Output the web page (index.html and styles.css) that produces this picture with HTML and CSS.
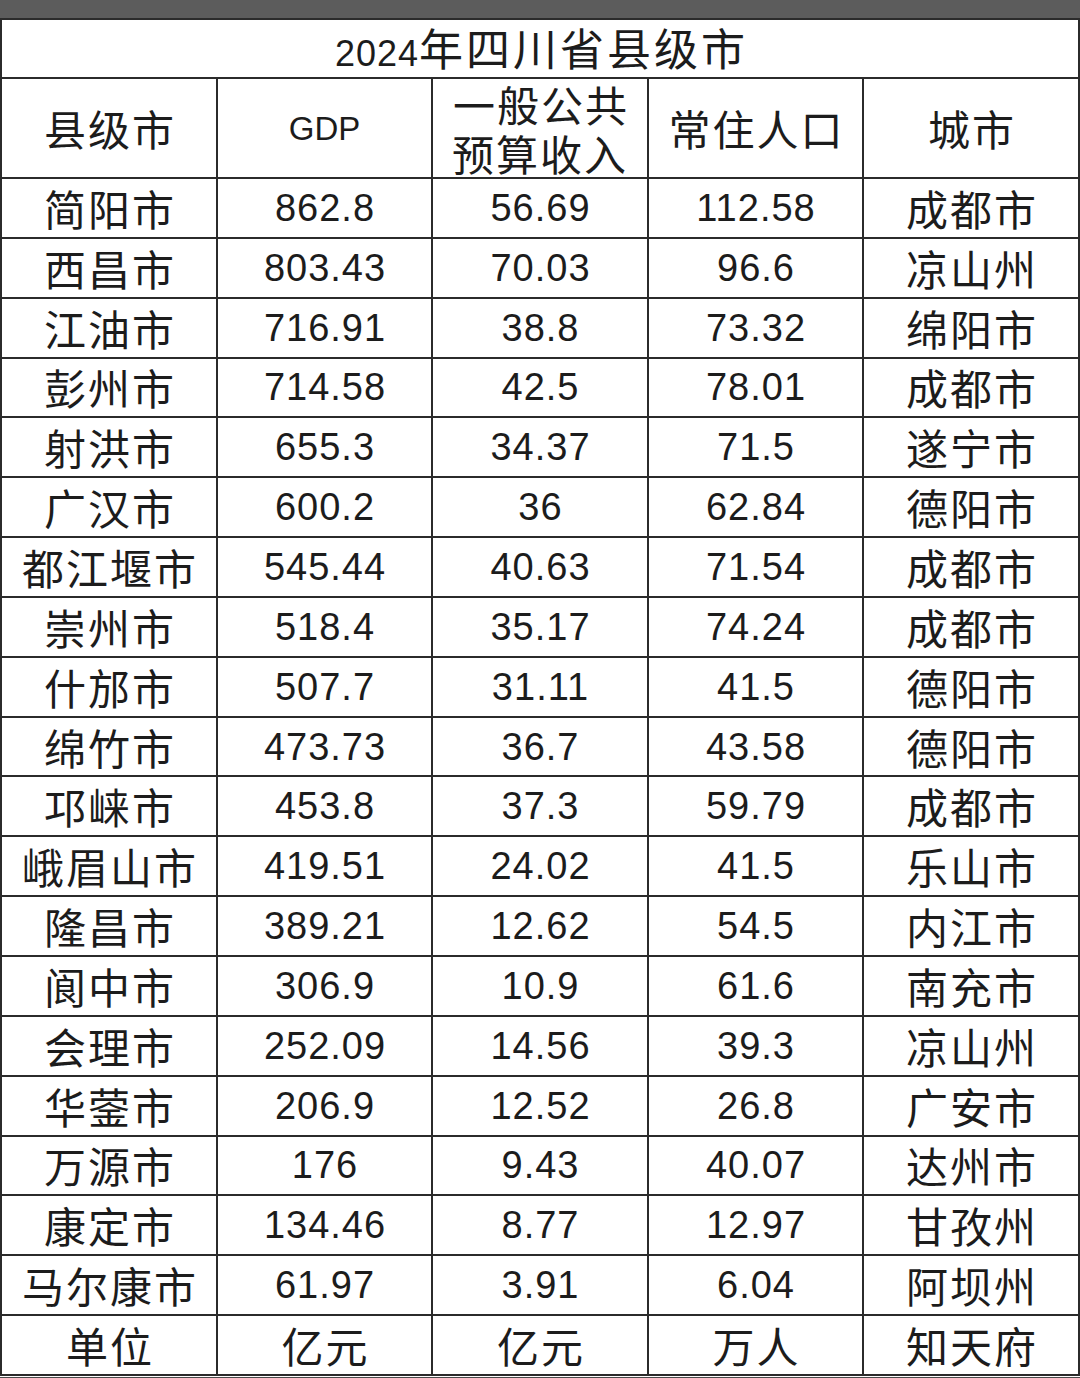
FILE: index.html
```html
<!DOCTYPE html>
<html lang="zh-CN">
<head>
<meta charset="utf-8">
<title>2024年四川省县级市</title>
<link rel="stylesheet" href="styles.css">
</head>
<body>
<div class="topbar"></div>
<table class="sheet">
  <colgroup>
    <col class="c1"><col class="c2"><col class="c3"><col class="c4"><col class="c5">
  </colgroup>
  <thead>
    <tr class="title-row"><th colspan="5"><span class="yr">2024</span>年四川省县级市</th></tr>
    <tr class="head-row">
      <th class="cn">县级市</th>
      <th class="gdp">GDP</th>
      <th class="cn two">一般公共<br>预算收入</th>
      <th class="cn">常住人口</th>
      <th class="cn">城市</th>
    </tr>
  </thead>
  <tbody>
    <tr><td class="cn">简阳市</td><td class="num">862.8</td><td class="num">56.69</td><td class="num">112.58</td><td class="cn">成都市</td></tr>
    <tr><td class="cn">西昌市</td><td class="num">803.43</td><td class="num">70.03</td><td class="num">96.6</td><td class="cn">凉山州</td></tr>
    <tr><td class="cn">江油市</td><td class="num">716.91</td><td class="num">38.8</td><td class="num">73.32</td><td class="cn">绵阳市</td></tr>
    <tr><td class="cn">彭州市</td><td class="num">714.58</td><td class="num">42.5</td><td class="num">78.01</td><td class="cn">成都市</td></tr>
    <tr><td class="cn">射洪市</td><td class="num">655.3</td><td class="num">34.37</td><td class="num">71.5</td><td class="cn">遂宁市</td></tr>
    <tr><td class="cn">广汉市</td><td class="num">600.2</td><td class="num">36</td><td class="num">62.84</td><td class="cn">德阳市</td></tr>
    <tr><td class="cn">都江堰市</td><td class="num">545.44</td><td class="num">40.63</td><td class="num">71.54</td><td class="cn">成都市</td></tr>
    <tr><td class="cn">崇州市</td><td class="num">518.4</td><td class="num">35.17</td><td class="num">74.24</td><td class="cn">成都市</td></tr>
    <tr><td class="cn">什邡市</td><td class="num">507.7</td><td class="num">31.11</td><td class="num">41.5</td><td class="cn">德阳市</td></tr>
    <tr><td class="cn">绵竹市</td><td class="num">473.73</td><td class="num">36.7</td><td class="num">43.58</td><td class="cn">德阳市</td></tr>
    <tr><td class="cn">邛崃市</td><td class="num">453.8</td><td class="num">37.3</td><td class="num">59.79</td><td class="cn">成都市</td></tr>
    <tr><td class="cn">峨眉山市</td><td class="num">419.51</td><td class="num">24.02</td><td class="num">41.5</td><td class="cn">乐山市</td></tr>
    <tr><td class="cn">隆昌市</td><td class="num">389.21</td><td class="num">12.62</td><td class="num">54.5</td><td class="cn">内江市</td></tr>
    <tr><td class="cn">阆中市</td><td class="num">306.9</td><td class="num">10.9</td><td class="num">61.6</td><td class="cn">南充市</td></tr>
    <tr><td class="cn">会理市</td><td class="num">252.09</td><td class="num">14.56</td><td class="num">39.3</td><td class="cn">凉山州</td></tr>
    <tr><td class="cn">华蓥市</td><td class="num">206.9</td><td class="num">12.52</td><td class="num">26.8</td><td class="cn">广安市</td></tr>
    <tr><td class="cn">万源市</td><td class="num">176</td><td class="num">9.43</td><td class="num">40.07</td><td class="cn">达州市</td></tr>
    <tr><td class="cn">康定市</td><td class="num">134.46</td><td class="num">8.77</td><td class="num">12.97</td><td class="cn">甘孜州</td></tr>
    <tr><td class="cn">马尔康市</td><td class="num">61.97</td><td class="num">3.91</td><td class="num">6.04</td><td class="cn">阿坝州</td></tr>
    <tr><td class="cn">单位</td><td class="cn">亿元</td><td class="cn">亿元</td><td class="cn">万人</td><td class="cn">知天府</td></tr>
  </tbody>
</table>
<div class="bottombar"></div>
</body>
</html>
```
FILE: styles.css
```css
html, body {
  margin: 0;
  padding: 0;
  background: #ffffff;
}
body {
  width: 1080px;
  height: 1378px;
  overflow: hidden;
  font-family: "Liberation Sans", "Noto Sans CJK SC", sans-serif;
  color: #1c1c1c;
}
.topbar {
  height: 18px;
  background: #5c5c5c;
}
.sheet {
  border-collapse: collapse;
  table-layout: fixed;
  width: 1078px;
  margin-left: 0;
}
.c1 { width: 216px; }
.c2 { width: 215px; }
.c3 { width: 216px; }
.c4 { width: 215px; }
.c5 { width: 216px; }
.sheet th, .sheet td {
  border: 2px solid #2b2b2b;
  padding: 0;
  text-align: center;
  vertical-align: middle;
  font-weight: 400;
  line-height: 1;
  white-space: nowrap;
}
.sheet .title-row th {
  height: 57px;
  font-family: "Noto Sans CJK SC", sans-serif;
  font-size: 44px;
  letter-spacing: 3px;
  text-indent: 3px;
  line-height: 1;
}
.title-row .yr {
  font-family: "Liberation Sans", sans-serif;
  font-size: 36px;
  letter-spacing: 1px;
}
.sheet .head-row th {
  height: 96px;
}
.sheet tbody td {
  height: 57.85px;
}
.cn {
  font-family: "Noto Sans CJK SC", sans-serif;
  font-size: 42px;
  letter-spacing: 2px;
  text-indent: 2px;
}
.sheet .two {
  line-height: 49px;
}
.gdp {
  font-family: "Liberation Sans", sans-serif;
  font-size: 33px;
}
.num {
  font-family: "Liberation Sans", sans-serif;
  font-size: 38px;
  letter-spacing: 1px;
  text-indent: 1px;
}
.bottombar {
  height: 4px;
  margin-top: 1px;
  background: #4a4a4a;
}
```
